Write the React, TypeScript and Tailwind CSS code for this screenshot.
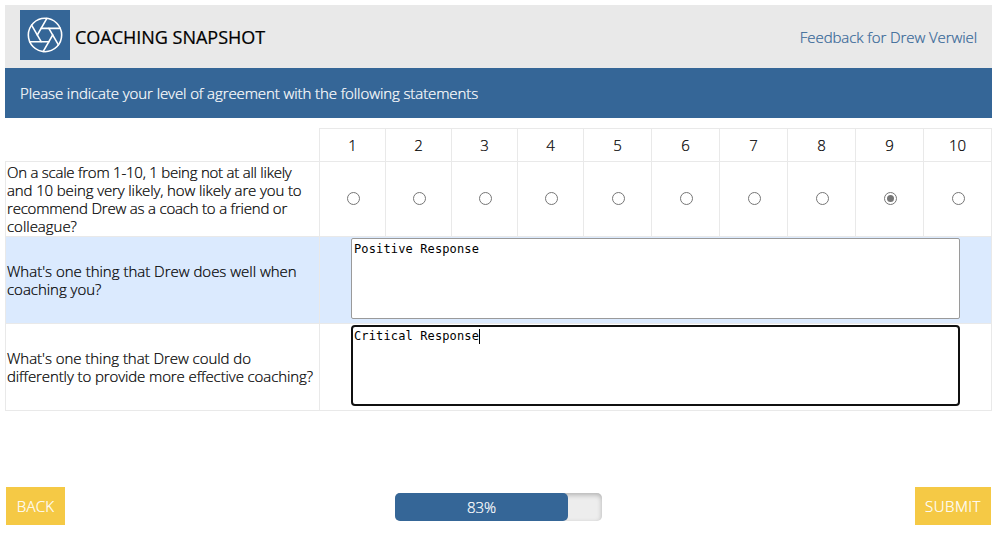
import { Aperture } from 'lucide-react';

const scale = [1, 2, 3, 4, 5, 6, 7, 8, 9, 10];

const line = 'block whitespace-nowrap';

function Prompt({ children, className = '' }: { children: React.ReactNode; className?: string }) {
  return (
    <div className={`flex flex-col justify-center border-t border-l border-[#e9e9e9] pl-px text-[15px] leading-[18px] ${className}`}>
      {children}
    </div>
  );
}

export default function App() {
  return (
    <div className="h-[540px] w-[997px] overflow-hidden bg-white p-[5px] font-['Open_Sans','Noto_Sans',sans-serif] font-light text-black [-webkit-text-stroke:0.22px]">
      <header className="flex h-[63px] items-center justify-between bg-[#e9e9e9] px-[15px]">
        <div className="flex items-center gap-[5px]">
          <div className="-mt-[3px] flex size-[50px] items-center justify-center bg-[#356697] text-white">
            <Aperture size={40} strokeWidth={0.95} />
          </div>
          <h1 className="pt-px text-[18px] font-medium tracking-[-0.01px]">COACHING SNAPSHOT</h1>
        </div>
        <div className="pt-0.5 text-[15px] tracking-[-0.08px] text-[#356697]">Feedback for Drew Verwiel</div>
      </header>
      <div className="flex h-[50px] items-center bg-[#356697] pl-[15px] text-[15px] tracking-[-0.09px] text-white">
        Please indicate your level of agreement with the following statements
      </div>

      <main className="mt-2.5 grid w-[987px] grid-cols-[314px_repeat(4,66px)_repeat(5,68px)_69px] grid-rows-[33px_75px_87px_88px]">
        <div />
        {scale.map((n) => (
          <div key={n} className="flex items-center justify-center border-t border-l border-[#e9e9e9] text-[15px] nth-[11]:border-r">
            {n}
          </div>
        ))}
        <Prompt>
          <span className={`${line} tracking-[-0.24px]`}>On a scale from 1-10, 1 being not at all likely</span>
          <span className={`${line} tracking-[-0.12px]`}>and 10 being very likely, how likely are you to</span>
          <span className={`${line} tracking-[-0.2px]`}>recommend Drew as a coach to a friend or</span>
          <span className={`${line} tracking-[-0.02px]`}>colleague?</span>
        </Prompt>
        {scale.map((n) => (
          <div key={n} className={`flex items-center justify-center border-t border-l border-[#e9e9e9] pb-0.5 pl-[2px] ${n === 10 ? 'border-r' : ''}`}>
            <span className="flex size-[13px] items-center justify-center rounded-full border border-[#767676] bg-white">
              {n === 9 && <span className="size-[7px] rounded-full bg-[#767676]" />}
            </span>
          </div>
        ))}
        <Prompt className="bg-[#dbeafe]">
          <span className={`${line} tracking-[-0.01px]`}>What's one thing that Drew does well when</span>
          <span className={`${line} tracking-[-0.02px]`}>coaching you?</span>
        </Prompt>
        <div className="col-span-10 border-x border-t border-[#e9e9e9] bg-[#dbeafe] pt-px pl-[31px] [-webkit-text-stroke:0px]">
          <textarea
            defaultValue="Positive Response"
            className="block h-[81px] w-[609px] resize-none rounded-[2px] border border-[#9a9a9a] bg-white px-[2px] py-[3px] font-['DejaVu_Sans_Mono',monospace] text-[12px] leading-[15px] font-normal tracking-[0.13px]"
          />
        </div>
        <Prompt className="border-b">
          <span className={`${line} tracking-[-0.04px]`}>What's one thing that Drew could do</span>
          <span className={`${line} tracking-[-0.1px]`}>differently to provide more effective coaching?</span>
        </Prompt>
        <div className="col-span-10 border border-[#e9e9e9] pt-px pl-[31px] [-webkit-text-stroke:0px]">
          <div className="flex h-[81px] w-[609px] items-start rounded-[4px] border-2 border-[#101010] bg-white px-px py-[2px] font-['DejaVu_Sans_Mono',monospace] text-[12px] leading-[15px] font-normal tracking-[0.13px]">
            Critical Response
            <span className="h-[15px] w-px bg-black" />
          </div>
        </div>
      </main>

      <footer className="mt-[76px] grid grid-cols-[389px_520px_76px] items-start px-px text-white">
        <button className="h-[38px] w-[59px] bg-[#f5c945] text-[15px] tracking-[0.3px]">BACK</button>
        <div className="mt-1.5 h-7 w-[207px] rounded-[5px] bg-[#ededed] shadow-[inset_0_2px_5px_rgba(0,0,0,0.25)]">
          <div className="flex h-full w-[173px] items-center justify-center rounded-[5px] bg-[#356697] text-[15px]">83%</div>
        </div>
        <button className="h-[38px] w-[76px] bg-[#f5c945] text-[15px] tracking-[0.5px]">SUBMIT</button>
      </footer>
    </div>
  );
}
